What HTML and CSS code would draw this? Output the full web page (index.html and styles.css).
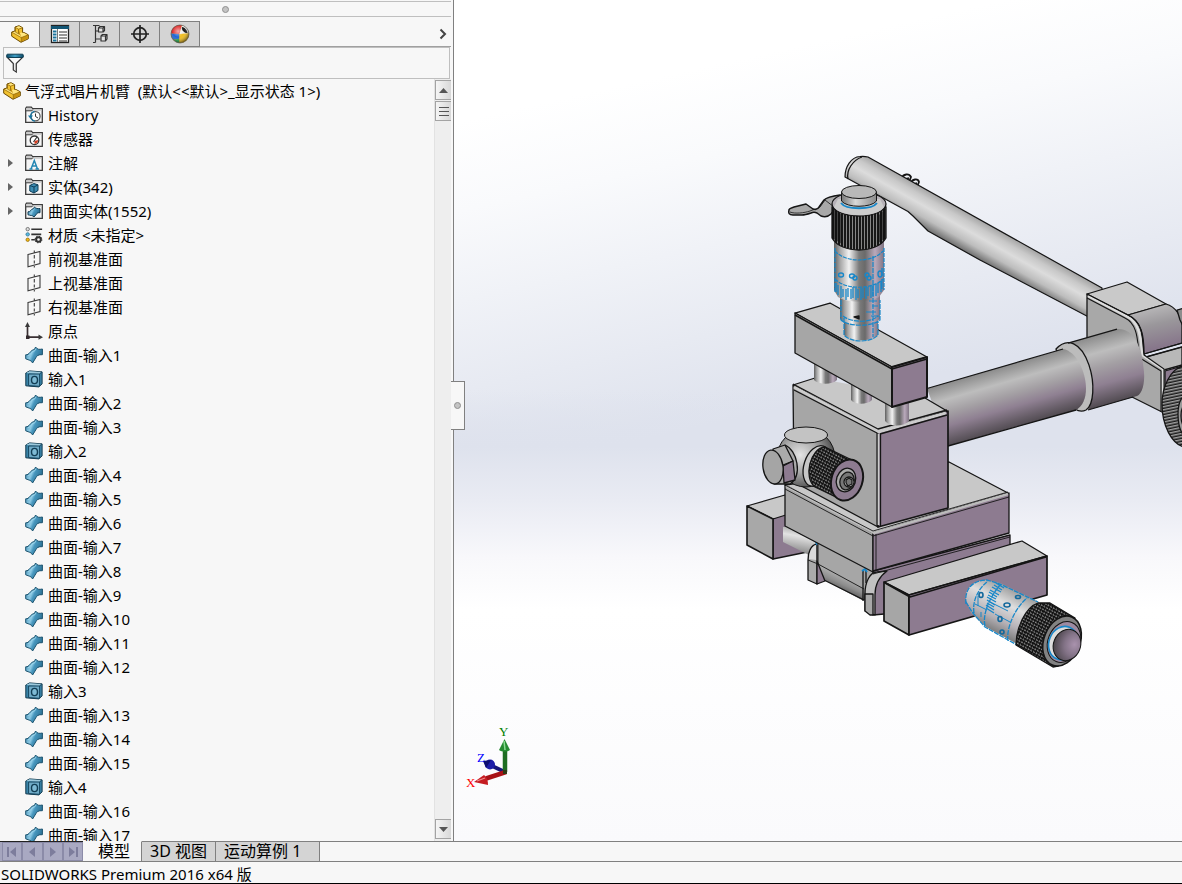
FILE: index.html
```html
<!DOCTYPE html>
<html lang="zh-CN">
<head>
<meta charset="utf-8">
<title>SOLIDWORKS Premium 2016 x64 版</title>
<link rel="stylesheet" href="styles.css">
</head>
<body>
<svg class="sprites" aria-hidden="true">
  <defs>
    <linearGradient id="surf-fill" x1="0" y1="0" x2="1" y2=".4">
      <stop offset="0" stop-color="#3c86ab"/><stop offset=".45" stop-color="#8cc9e4"/><stop offset=".6" stop-color="#4796bd"/><stop offset="1" stop-color="#2f7396"/>
    </linearGradient>
    <linearGradient id="funnel-top" x1="0" x2="1"><stop offset="0" stop-color="#0f4a66"/><stop offset=".5" stop-color="#3fa0c8"/><stop offset="1" stop-color="#0f4a66"/></linearGradient>
    <radialGradient id="ball-shade" cx=".4" cy=".35" r=".65"><stop offset="0" stop-color="#fff" stop-opacity=".6"/><stop offset=".5" stop-color="#fff" stop-opacity="0"/><stop offset="1" stop-color="#000" stop-opacity=".5"/></radialGradient>
  </defs>
  <symbol id="i-part" viewBox="0 0 18 18">
    <path d="M4 2 8 .7l3.600 2V8L13 7.500l4.300 2.300v4L10 17.300.7 11.200V7L4 6z" fill="#f2c230" stroke="#6b4a00" stroke-linejoin="round"/>
    <path d="M4.500 2.200 8 1.300l3 1.500L7.500 4zM1.200 7.200 4.500 6.600l3 2 3-1 2.500 .5 3.500 2-6.300 2.500z" fill="#ffe680"/>
    <path d="M7.500 4v5l3 2.500v5.300L17 13.600V10l-6.500 2.500" fill="#c8920f"/>
    <path d="m4.300 2.300 3.200 1.900v4.600L4.300 7zM7.500 4.200l4-1.400M10.300 12.600l6.700-2.700M10.300 12.600V17M1 7.300l9.300 5.300" fill="none" stroke="#8a6207" stroke-width=".7"/>
  </symbol>
  <symbol id="i-folder" viewBox="0 0 18 18">
    <path d="M.7 16.300V2.500l.8-1.300h4.800l1.300 1.500h9.700v13.600z" fill="#f5f5f5" stroke="#3c3c3c" stroke-width="1.300"/>
    <path d="M1.300 2h5l1 1.500h9.300v1.300H1.300z" fill="#c9c9c9"/>
    <path d="M.7 4.800h6.200l1-1.300" fill="none" stroke="#3c3c3c"/>
  </symbol>
  <symbol id="i-history" viewBox="0 0 18 18"><use href="#i-folder"/>
    <circle cx="10.500" cy="10.300" r="4.600" fill="#fff" stroke="#555" stroke-width="1.200"/><path d="M10.500 7.500v3l2.500 1.500" fill="none" stroke="#333"/><path d="M3 9.500h5L5.500 13z" fill="#1776a3"/><path d="M5.600 10a5 5 0 0 1 4-4.600M6 12.500a5 5 0 0 0 4 2.700" fill="none" stroke="#1776a3" stroke-width="1.200"/></symbol>
  <symbol id="i-sensor" viewBox="0 0 18 18"><use href="#i-folder"/>
    <circle cx="9.500" cy="10.300" r="4.300" fill="#fff" stroke="#333" stroke-width="1.300"/><path d="M9.500 14a4 4 0 0 0 3.600-4L9.500 11z" fill="#d43d20"/><path d="m8.500 12 3.500-5" stroke="#333" stroke-width="1.200"/></symbol>
  <symbol id="i-note" viewBox="0 0 18 18"><use href="#i-folder"/>
    <path d="M4.500 15h3M10.500 15h3.500M6 15 9.300 6.500 12.500 15M7.200 12h4.200" fill="none" stroke="#2386b3" stroke-width="1.500"/></symbol>
  <symbol id="i-solid" viewBox="0 0 18 18"><use href="#i-folder"/>
    <path d="m4.800 7.500 4-2 4.200 1.300v5.700L9 15l-4.200-2z" fill="#3e8db3" stroke="#0e3f59"/><path d="M4.800 7.500 9 9l4-2.200M9 9v6" fill="none" stroke="#0e3f59"/></symbol>
  <symbol id="i-surfset" viewBox="0 0 18 18"><use href="#i-folder"/>
    <path d="M3 9.800c2.500 .5 3-3 5.500-3.200L9.500 5c1.500 1.700 3 1.700 5.500 1.500v4.200c-2.500-.3-3.500 1-4 2L9 15c-1.500-1.800-3.500-1.500-6-2.200z" fill="url(#surf-fill)" stroke="#153f56"/></symbol>
  <symbol id="i-material" viewBox="0 0 20 18">
    <g stroke="#333" stroke-width="1.700"><path d="M7 2.500h12M7 8.300h11M7 14.300h4"/></g>
    <circle cx="3" cy="2.500" r="1.900" fill="#ddd" stroke="#555" stroke-width=".8"/><circle cx="3" cy="8.300" r="1.900" fill="#59b9e0" stroke="#256c8e" stroke-width=".8"/><circle cx="3" cy="14.300" r="1.900" fill="#f5b914" stroke="#8b6606" stroke-width=".8"/>
    <circle cx="15" cy="14" r="2.600" fill="none" stroke="#333" stroke-width="2.200"/><circle cx="15" cy="14" r="3.700" fill="none" stroke="#333" stroke-width="1.200" stroke-dasharray="1.400 1.500"/></symbol>
  <symbol id="i-plane" viewBox="0 0 18 18">
    <path d="M3 4.500 15 1.500v12L3 16.800zM9.300 .5v2M9.300 5v3.500M9.300 10.500v3M9.300 16v1.500" fill="none" stroke="#3c3c3c" stroke-width="1.100"/></symbol>
  <symbol id="i-origin" viewBox="0 0 18 18">
    <path d="M2.500 15V4M2.500 15.200H15" stroke="#3a3033" stroke-width="1.700"/><path d="M0 5 2.500 0 5 5zM13.500 12.600l4.500 2.600-4.500 2.600z" fill="#3a3a3a"/><rect x="1" y="13.500" width="3.500" height="3.500" fill="#332a2d"/></symbol>
  <symbol id="i-surf" viewBox="0 0 18 18">
    <path d="M.7 8.800C4.500 9.300 5 4 9.300 3.600L10.600 1c1.500 2.500 3.500 2.700 6.800 2v5.700c-4-.4-6 1.300-6.600 3.100L7.600 17C6.300 14 4 14.300 .7 12.800z" fill="url(#surf-fill)" stroke="#1b536f"/>
    <path d="M3 9.800c3-.5 3.500-5 7-5.200l1-1.800" fill="none" stroke="#a3dbef" stroke-width=".8"/></symbol>
  <symbol id="i-body" viewBox="0 0 18 18">
    <path d="M.8 3 4.500 .9l12.600 1v12l-3.300 3L.8 15.800z" fill="#3984a8" stroke="#12394d"/><path d="m1 3 3.500-1.800 12 .9L14 4z" fill="#9cc9dc"/><path d="M3.600 4h11v12.300L3.600 15.600z" fill="#6fabc7" stroke="#174761"/><path d="m14.500 4 2.300-2" stroke="#174761"/>
    <ellipse cx="9.500" cy="10" rx="3" ry="3.600" fill="#7ebad4" stroke="#123e55" stroke-width="1.400"/></symbol>
</svg>

<div class="app">
  <main class="workspace">
    <aside class="panel">
      <div class="grip"><span class="dot"></span></div>
      <nav class="tabs" aria-label="管理器">
        <button class="tab active" aria-label="特征树"><svg width="18" height="18"><use href="#i-part"/></svg></button>
        <button class="tab" aria-label="属性"><svg width="20" height="20" viewBox="0 0 20 20"><rect x="1.500" y="1.500" width="17" height="17" fill="#fff" stroke="#222" stroke-width="1.300"/><path d="M1 2h18v3H1z" fill="#125574"/><path d="M7.500 5v13" stroke="#777"/><path d="M3 7.500h3.500M3 10.500h3.500M3 13.500h3.500M3 16.500h3.500" stroke="#1b739b" stroke-width="1.800"/><path d="M9 8h8M9 11h8M9 14h8M9 17h8" stroke="#333" stroke-width="1.100"/></svg></button>
        <button class="tab" aria-label="配置"><svg width="20" height="20" viewBox="0 0 20 20"><g fill="#e4e4e4" stroke="#333" stroke-width="1.200" stroke-linejoin="round"><path d="M5.500 1.500v17M5.500 7h4M5.500 15h5M3 1.500h2.500M3 18.500h2.500M5.500 1.500h4" fill="none"/><path d="M8.500 4 10 2.500h4.500v4L13 8H8.500zM8.500 4H13v4M13 4l1.500-1.500M11 12l1.500-1.500H17v4.500L15.500 17H11zM11 12h4.500v5M15.500 12l1.500-1.500"/></g></svg></button>
        <button class="tab" aria-label="尺寸"><svg width="20" height="20" viewBox="0 0 20 20"><circle cx="10" cy="10" r="6.300" fill="none" stroke="#222" stroke-width="1.700"/><path d="M10 1v18M1 10h18" stroke="#222" stroke-width="1.700"/></svg></button>
        <button class="tab" aria-label="外观"><svg width="20" height="20" viewBox="0 0 20 20"><circle cx="10" cy="10" r="9" fill="#efbd1e"/><path d="M9.500 10 1 9.500A9 9 0 0 1 12 1.200z" fill="#e02d2d"/><path d="M9.500 10 12 1.200a9 9 0 0 1 7 8.300z" fill="#ececec"/><path d="m9.500 10-8.500-.5a9 9 0 0 0 2.500 6.300l6-1z" fill="#1f66d3"/><path d="m3.500 15.800 6-1V19a9 9 0 0 1-6-3.200z" fill="#21a34a"/><path d="M9.500 10 19 9.500A9 9 0 0 1 9.500 19z" fill="#efbd1e"/><path d="M12 3c2.500 0 5 3 5.500 6-3 .5-6.500-3-5.500-6z" fill="#161616"/><circle cx="10" cy="10" r="9" fill="url(#ball-shade)" stroke="#555" stroke-width=".7"/></svg></button>
        <button class="more" aria-label="更多"><svg width="8" height="12" viewBox="0 0 8 12"><path d="m1.500 1.500 4.500 4.500-4.500 4.500" fill="none" stroke="#444" stroke-width="2"/></svg></button>
      </nav>
      <label class="filter">
        <svg width="18" height="20" viewBox="0 0 18 20"><path d="M1 4 7.300 10.500V17l3 2v-8.500L17 4z" fill="#fafafa" stroke="#333" stroke-width="1.200"/><path d="M9.300 10.500V18" stroke="#aaa"/><rect x=".7" y="1.200" width="16.600" height="3.300" rx="1" fill="url(#funnel-top)" stroke="#0f4056"/></svg>
        <input type="text" aria-label="过滤器">
      </label>
      <div class="tree-area">
        <ul class="tree">
          <li class="root"><svg class="ic"><use href="#i-part"/></svg><span>气浮式唱片机臂  (默认&lt;&lt;默认&gt;_显示状态 1&gt;)</span></li>
          <li><svg class="ic"><use href="#i-history"/></svg><span>History</span></li>
          <li><svg class="ic"><use href="#i-sensor"/></svg><span>传感器</span></li>
          <li><button class="exp" aria-label="展开"></button><svg class="ic"><use href="#i-note"/></svg><span>注解</span></li>
          <li><button class="exp" aria-label="展开"></button><svg class="ic"><use href="#i-solid"/></svg><span>实体(342)</span></li>
          <li><button class="exp" aria-label="展开"></button><svg class="ic"><use href="#i-surfset"/></svg><span>曲面实体(1552)</span></li>
          <li><svg class="ic"><use href="#i-material"/></svg><span>材质 &lt;未指定&gt;</span></li>
          <li><svg class="ic"><use href="#i-plane"/></svg><span>前视基准面</span></li>
          <li><svg class="ic"><use href="#i-plane"/></svg><span>上视基准面</span></li>
          <li><svg class="ic"><use href="#i-plane"/></svg><span>右视基准面</span></li>
          <li><svg class="ic"><use href="#i-origin"/></svg><span>原点</span></li>
          <li><svg class="ic"><use href="#i-surf"/></svg><span>曲面-输入1</span></li>
          <li><svg class="ic"><use href="#i-body"/></svg><span>输入1</span></li>
          <li><svg class="ic"><use href="#i-surf"/></svg><span>曲面-输入2</span></li>
          <li><svg class="ic"><use href="#i-surf"/></svg><span>曲面-输入3</span></li>
          <li><svg class="ic"><use href="#i-body"/></svg><span>输入2</span></li>
          <li><svg class="ic"><use href="#i-surf"/></svg><span>曲面-输入4</span></li>
          <li><svg class="ic"><use href="#i-surf"/></svg><span>曲面-输入5</span></li>
          <li><svg class="ic"><use href="#i-surf"/></svg><span>曲面-输入6</span></li>
          <li><svg class="ic"><use href="#i-surf"/></svg><span>曲面-输入7</span></li>
          <li><svg class="ic"><use href="#i-surf"/></svg><span>曲面-输入8</span></li>
          <li><svg class="ic"><use href="#i-surf"/></svg><span>曲面-输入9</span></li>
          <li><svg class="ic"><use href="#i-surf"/></svg><span>曲面-输入10</span></li>
          <li><svg class="ic"><use href="#i-surf"/></svg><span>曲面-输入11</span></li>
          <li><svg class="ic"><use href="#i-surf"/></svg><span>曲面-输入12</span></li>
          <li><svg class="ic"><use href="#i-body"/></svg><span>输入3</span></li>
          <li><svg class="ic"><use href="#i-surf"/></svg><span>曲面-输入13</span></li>
          <li><svg class="ic"><use href="#i-surf"/></svg><span>曲面-输入14</span></li>
          <li><svg class="ic"><use href="#i-surf"/></svg><span>曲面-输入15</span></li>
          <li><svg class="ic"><use href="#i-body"/></svg><span>输入4</span></li>
          <li><svg class="ic"><use href="#i-surf"/></svg><span>曲面-输入16</span></li>
          <li><svg class="ic"><use href="#i-surf"/></svg><span>曲面-输入17</span></li>
        </ul>
        <div class="scroll">
          <button class="sbtn" aria-label="向上"><svg width="9" height="5"><path d="M0 5 4.500 0 9 5z" fill="#555"/></svg></button>
          <button class="sbtn" aria-label="滑块"><svg width="10" height="11"><path d="M0 1.500h10M0 5.500h10M0 9.500h10" stroke="#555"/></svg></button>
          <span class="track"></span>
          <button class="sbtn" aria-label="向下"><svg width="9" height="5"><path d="M0 0h9L4.500 5z" fill="#555"/></svg></button>
        </div>
      </div>
      <button class="splitter" aria-label="折叠面板"><span class="dot"></span></button>
    </aside>

    <section class="viewport" aria-label="模型视图">
      <svg class="scene" viewBox="454 0 728 841" preserveAspectRatio="xMidYMid slice">
        <defs>
          <linearGradient id="sky" gradientUnits="userSpaceOnUse" x1="600" y1="90" x2="676" y2="432"><stop offset="0" stop-color="#fff"/><stop offset=".25" stop-color="#f9fafc"/><stop offset="1" stop-color="#dee2ed"/></linearGradient>
          <linearGradient id="ground" gradientUnits="userSpaceOnUse" x1="0" y1="390" x2="0" y2="610"><stop offset="0" stop-color="#dee2ed" stop-opacity="0"/><stop offset=".26" stop-color="#dee2ed"/><stop offset=".5" stop-color="#e9ebf3"/><stop offset=".76" stop-color="#f8f8fb"/><stop offset="1" stop-color="#fff"/></linearGradient>
          <linearGradient id="low" gradientUnits="userSpaceOnUse" x1="0" y1="610" x2="0" y2="841"><stop offset="0" stop-color="#fff"/><stop offset="1" stop-color="#fafafc"/></linearGradient>
          <linearGradient id="arm" gradientUnits="userSpaceOnUse" x1="1000" y1="231" x2="982" y2="263"><stop offset="0" stop-color="#a5a5a5"/><stop offset=".2" stop-color="#c8c8c8"/><stop offset=".42" stop-color="#dcdcdc"/><stop offset=".7" stop-color="#bdbdbd"/><stop offset="1" stop-color="#626262"/></linearGradient>
          <linearGradient id="tube" gradientUnits="userSpaceOnUse" x1="1000" y1="367" x2="1018" y2="429"><stop offset="0" stop-color="#8a8a8a"/><stop offset=".25" stop-color="#bdbdbd"/><stop offset=".45" stop-color="#a4a0a4"/><stop offset=".65" stop-color="#8f8092"/><stop offset=".85" stop-color="#665d67"/><stop offset="1" stop-color="#494449"/></linearGradient>
          <linearGradient id="sleeve" gradientUnits="userSpaceOnUse" x1="1095" y1="335" x2="1114" y2="403"><stop offset="0" stop-color="#8a8a8a"/><stop offset=".25" stop-color="#bdbdbd"/><stop offset=".45" stop-color="#a4a0a4"/><stop offset=".7" stop-color="#8f8092"/><stop offset="1" stop-color="#4f494f"/></linearGradient>
          <linearGradient id="metal" x1="0" x2="1"><stop offset="0" stop-color="#5e5e5e"/><stop offset=".12" stop-color="#a5a5a5"/><stop offset=".3" stop-color="#f2f2f2"/><stop offset=".5" stop-color="#7a7a7a"/><stop offset=".62" stop-color="#6a6a6a"/><stop offset=".82" stop-color="#b9a9bb"/><stop offset="1" stop-color="#807584"/></linearGradient>
          <linearGradient id="cap" x1="0" x2="1"><stop offset="0" stop-color="#777"/><stop offset=".4" stop-color="#d8d8d8"/><stop offset="1" stop-color="#8a8a8a"/></linearGradient>
          <linearGradient id="bend" x1="0" y1="0" x2=".25" y2="1"><stop offset="0" stop-color="#c6c6c6"/><stop offset=".5" stop-color="#9a979b"/><stop offset="1" stop-color="#857389"/></linearGradient>
          <linearGradient id="rod" x1=".6" y1="0" x2=".4" y2="1"><stop offset="0" stop-color="#999"/><stop offset=".35" stop-color="#e2e2e2"/><stop offset="1" stop-color="#777"/></linearGradient>
          <linearGradient id="rod-low" gradientUnits="userSpaceOnUse" x1="845" y1="576" x2="838" y2="592"><stop offset="0" stop-color="#b0b0b0"/><stop offset=".5" stop-color="#8c8c8c"/><stop offset="1" stop-color="#4c4c4c"/></linearGradient>
          <linearGradient id="mic" gradientUnits="userSpaceOnUse" x1="1013" y1="588" x2="991" y2="632"><stop offset="0" stop-color="#999"/><stop offset=".35" stop-color="#dfdfdf"/><stop offset=".7" stop-color="#b6b2b7"/><stop offset="1" stop-color="#777"/></linearGradient>
          <radialGradient id="ball" cx=".4" cy=".45" r=".6"><stop offset="0" stop-color="#e4e4e4"/><stop offset=".5" stop-color="#aaa"/><stop offset="1" stop-color="#4c4c4c"/></radialGradient>
          <radialGradient id="dome" cx=".75" cy=".4" r=".8"><stop offset="0" stop-color="#a992ad"/><stop offset=".45" stop-color="#837387"/><stop offset="1" stop-color="#454045"/></radialGradient>
          <pattern id="knurl-v" width="3" height="8" patternUnits="userSpaceOnUse"><rect width="3" height="8" fill="#161616"/><rect width="1" height="8" fill="#858585"/></pattern>
          <pattern id="knurl-x" width="3" height="3" patternUnits="userSpaceOnUse" patternTransform="rotate(28)"><rect width="3" height="3" fill="#111"/><rect width="2" height="1" fill="#888"/><rect width="1" height="1" y="2" fill="#555"/></pattern>
          <pattern id="knurl-h" width="6" height="3" patternUnits="userSpaceOnUse" patternTransform="rotate(-12)"><rect width="6" height="3" fill="#1a1a1a"/><rect width="6" height="1.500" fill="#a0a0a0"/></pattern>
        </defs>
        <path d="M254 0h1200v611H254z" fill="url(#sky)"/>
        <path d="M254 390h1200v221H254z" fill="url(#ground)"/>
        <path d="M254 610h1200v275H254z" fill="url(#low)"/>

        <g stroke="#151515" stroke-width="1.300" stroke-linejoin="round">
          <path d="M902 178c1-4 7-5 9-1l-2 5M911 183c1-4 7-5 8-1l-2 5M905 179l4-1M914 184l3-1" fill="none" stroke-width="1.800"/>
          <path d="M845 177c0-10 6-20 15-20.500 3-.5 6 0 8 .500l234 131v36l-122-64-52-29-15-15-5-4.500z" fill="url(#arm)" stroke-width="1.200"/>
          <path d="M848 179c-2-9 5-19 14-22" fill="none"/>
          <path d="M789 210c0-1 2-2 5-3l12-3 7 5c3 1 5 0 6-2l5-7c3-3 9-4 16-5l4 6-9 8-4 5c-3 3-7 3-10 2l-4-3c-2-1-4-1-6 0-3 1-6 2-9 2h-9c-4 0-5-2-4-5z" fill="#a8a8a8" stroke-width="1.500"/>
          <path d="M790 212c5 2 14 1 20-1 4-2 8-2 10-4l5-7 9 7" fill="none" stroke-width=".8"/>

          <path d="M1087 294l41 21c18 8 14 29 16 40l20 14v44l-32-16-45-45z" fill="#a8a8a8"/>
          <path d="m1087 294 40-12 39 22-38 11z" fill="#c9c9c9"/>
          <path d="m1128 315 38-11c10 3 16 13 16 20v19l-38 11c0-18-2-32-16-39z" fill="url(#bend)"/>
          <path d="m1146 357 36-10v18l-18 5z" fill="#b8b8b8"/>
          <path d="m1165 371 17-5v34h-17z" fill="#8d7b90"/>
          <path d="M1088 296 1127 316.500c16 8 13 30 16 39l20 13.500v43" fill="none" stroke="#ddd" stroke-width="2.500"/>
          <path d="m1087 294 41 21c18 8 14 29 16 40l20 14v44M1087 298l38 20c15 7 12 30 15 40l21 13v41M1144 354l38-11M1146 357l36-10" fill="none" stroke-width="1.100"/>
          <path d="m1177 310 7-2v20l-4-8z" fill="#8c8c8c"/>
          <path d="M1184 366c-14 2-22 22-22 38 0 22 10 40 22 43z" fill="url(#knurl-h)"/>
          <path d="M1184 396c-8 6-8 30 0 40z" fill="#9a9a9a"/><path d="M1184 405c-4 5-4 16 0 22z" fill="#8d7b90"/>
          <path d="m1068 343 49-14c16-1 25 16 27 43 1 12-2 22-7 24l-49 14c9-16 7-63-20-67z" fill="url(#sleeve)" stroke="none"/>
          <path d="M1056 349c11-12 25-7 33 16 6 18 5 40-3 45-4 2-8 1-11-1z" fill="#bcbcbc"/>
          <path d="m927 388.500 136-39.500c20 3 33 50 13 61L948 446z" fill="url(#tube)" stroke="none"/>
          <path d="m927 388.500 136-39.500M1076 410 948 446M1068 343l49-14M1088 410l45-13" fill="none"/>

          <path d="m747 506 38-11 30 24h-42z" fill="#c8c8c8"/>
          <path d="m773 519 16-5 28 36-44 9z" fill="#8d7b90"/>
          <path d="m747 506 26 13v40l-26-14z" fill="#a8a8a8" stroke-width="1.600"/>
          <path d="m783 527 10-1 24 16-6 14-28-14z" fill="url(#rod)" stroke="none"/>
          <path d="m785 486 88 47v61l-8 6-48-29v-28l-32-17z" fill="#a6a6a6" stroke="none"/>
          <path d="m818 565 48 23v12l-4 0-42-22z" fill="url(#rod-low)" stroke="none"/><path d="m820 578 44 22" fill="none"/>
          <path d="M808 560c0-8 3-15 9-16v40l-9-4z" fill="#aaa"/><path d="M809 559c0-7 3-13 7-14v15z" fill="#dadada" stroke="none"/>
          <path d="m817 561 8 20-8 3z" fill="#8d7b90"/><path d="M808 560l10 4v-23M818 564l46 25" fill="none" stroke-width=".9"/><path d="m815 541 2 4" stroke="#1787c9"/>
          <path d="m873 571 137-36v10L884 614l-11 1z" fill="#8d7b90"/>
          <path d="M865 594c0-12 5-22 12-22l10-1c-7 5-12 12-12 24v20l-10-4z" fill="#c1c1c1"/>
          <path d="M865 594h8v21h-3l-5-4z" fill="#a8a8a8"/><path d="M863 571v30M866 571v12" fill="none"/><path d="M862 571l3-2 2 3" fill="none" stroke="#1787c9" stroke-width="2"/>
          <path d="m785 485 164-23 59 31-135 40z" fill="#c8c8c8"/>
          <path d="m785 485 88 48v39l-88-46z" fill="#a6a6a6"/>
          <path d="m873 533 136-40v40l-136 38z" fill="#8d7b90"/>
          <path d="m786 486 88 47 134-39" fill="none" stroke="#bbb" stroke-width="2.500"/><path d="m785 489 88 47 136-39M876 534v36M785 485l88 46 135-39M873 574l137-37" fill="none" stroke-width=".9"/>

          <path d="m793 385 22-7 110 20 22 13-69 21z" fill="#c8c8c8" stroke="none"/><path d="m793 385 22-7M925 398l22 13" fill="none"/>
          <path d="m793 385 85 47v95l-84-45z" fill="#a6a6a6"/>
          <path d="m878 432 70-21v97l-70 19z" fill="#8d7b90" stroke-width="1.700"/>
          <path d="m794 387 84 45 68-19M878 434v91" fill="none" stroke="#ccc" stroke-width="3"/>
          <path d="m793 384 85 45 69-19M794 390l83 43v93M880.500 434v92M880 434l67-19" fill="none"/>
          <g fill="url(#metal)" stroke="none"><path d="M814 364h23v16c-5 5-18 5-23 0z"/><path d="M851 384h21v16c-5 5-17 5-21 0z"/><path d="M885 402h24v19c-6 6-19 6-24 0z"/></g>
          <path d="m795 313 35-10 97 54-35 10z" fill="#c8c8c8"/>
          <path d="m795 313 97 54v40l-97-54z" fill="#a6a6a6"/>
          <path d="m892 367 35-10v40l-35 10z" fill="#8d7b90" stroke-width="2"/>
          <path d="m795 315 97 54 35-10" fill="none" stroke-width="1.500"/>

          <g stroke="none"><path d="M844 315h34v20c-7 7-27 7-34 0z" fill="url(#metal)"/><path d="M840 290h40v29c-7 8-33 8-40 0z" fill="url(#metal)"/><path d="M834 240h50v50l-5 7c-10 6-32 6-41 0l-4-7z" fill="url(#metal)"/></g>
          <g fill="none" stroke="#1787c9" stroke-width="1.200">
            <path d="M835 251c10 12 38 12 48 0M835 279c10 11 38 11 48 0M835 248v44M884 248v42" stroke-dasharray="4 1"/>
            <path d="M836 283v9m2-7v10m3-9v12m2-9v8m3-8v11m2-12v9m3-8v10m2-12v11m3-10v12m2-11v9m3-10v12m2-12v10m3-11v12m2-12v9m3-10v12m2-13v11m3-12v12m2-13v10m3-12v11m1-13v10" stroke-width="1.300"/>
            <path d="M873 256v81M841 300v20c8 7 31 7 39 0v-20M844 318v17c7 8 27 8 34 0v-13M843 316c8 7 28 7 35 0" stroke-dasharray="5 1"/>
            <path d="M869 301h8M872 306h6M866 312h10M871 316h8" stroke-width="1"/>
            <g stroke-width="1.400"><ellipse cx="841" cy="275" rx="2.500" ry="2"/><ellipse cx="852" cy="276" rx="2.500" ry="2"/><ellipse cx="855" cy="278" rx="2" ry="2"/><ellipse cx="867" cy="275" rx="2" ry="2"/><ellipse cx="869" cy="278" rx="2" ry="2"/><ellipse cx="880" cy="274" rx="2" ry="3"/><path d="M882 268v8"/></g>
          </g>
          <path d="m854 317 5-1v3z" fill="#222"/>
          <path d="M832 207v31c9 16 45 16 54 0v-31z" fill="url(#knurl-v)"/><path d="M832 207v31l10 6v-29zM878 216v27l8-5v-30z" fill="#111" fill-opacity=".55" stroke="none"/>
          <ellipse cx="859" cy="204" rx="27" ry="12" fill="#b6b1b7"/><path d="M834 207c6 10 42 12 50 0l-4-8h-42z" fill="#ccc" stroke="none"/>
          <path d="M841 203c5 7 31 7 36 0" fill="none" stroke="#1787c9" stroke-width="1.800"/>
          <path d="M841.500 192v9c5 7 30 7 35 0v-9z" fill="url(#cap)" stroke-width="1"/><ellipse cx="859" cy="192" rx="17.500" ry="6.500" fill="#b8b8b8" stroke-width="1"/>

          <circle cx="806" cy="458" r="29" fill="url(#ball)" stroke-width="1"/><ellipse cx="806" cy="435" rx="21.500" ry="8" fill="#c3c3c3" stroke-width="1"/>
          <path d="m773 449 12-4c12 5 18 30 5 39h-16z" fill="#aaa"/><path d="m783 466 10-5 2 19-11 3z" fill="#8d7b90"/><path d="m785 445 8 16-10 4" fill="none"/>
          <ellipse cx="773" cy="467" rx="10" ry="17" fill="#a5a5a5" transform="rotate(-8 773 467)"/>
          <ellipse cx="817" cy="466" rx="13" ry="21" fill="#c7c7c7" transform="rotate(18 817 466)"/>
          <path d="M825 447c-15 1-22 31-10 40l27 13 14-38z" fill="url(#knurl-x)"/>
          <ellipse cx="847" cy="480" rx="15.500" ry="21" fill="#8d7b90" transform="rotate(18 847 480)" stroke-width="2"/>
          <ellipse cx="846" cy="480" rx="9.500" ry="12" fill="#aaa" transform="rotate(18 846 480)"/><ellipse cx="847" cy="481" rx="7" ry="9" fill="#777" transform="rotate(18 847 481)"/><circle cx="849" cy="482" r="5" fill="#ddd"/><path d="m846 480 3-2 3 2v4l-4 2-2-3z" fill="#777"/>

          <path d="m884 582 138-41 25 15-138 39z" fill="#c8c8c8"/><path d="m884 582 25 13v40l-25-14z" fill="#a6a6a6" stroke-width="1.700"/><path d="m909 595 138-39v39l-138 40z" fill="#8d7b90" stroke-width="1.700"/>
          <path d="m885 583 25 14 136-40" fill="none" stroke-width="1.500"/>
          <path d="M966 600c-2-10 6-20 21-20l13 3 39 19-20 43-33-18-15-14z" fill="url(#mic)" stroke="none"/>
          <g fill="none" stroke="#1787c9" stroke-width="1.300"><path d="M966 604c-2-14 6-24 21-24l13 4 38 18M966 602l6 10 13 15 32 18M974 613c-2-13 5-25 14-32M985 626c-3-13 6-31 16-42M1008 641c-2-13 7-33 19-43" stroke-dasharray="5 1"/>
            <path d="m996 583 8 5m-10-3 8 5m-10-3 9 5m-11-2 9 5m-10-3 8 5m-9-2 8 4m-9-2 9 5m-9-2 8 5m-8-2 7 4m-8-2 8 5m-8-2 8 5" stroke-width="1.300"/><path d="M975 604l12 6M995 614l15 8M990 602l18 9M978 596v10M981 612v5" stroke-width="1"/></g>
          <g fill="none" stroke="#14699c" stroke-width="1.600"><ellipse cx="981" cy="595" rx="2" ry="2.500"/><ellipse cx="1007" cy="605" rx="3" ry="2"/><ellipse cx="1018" cy="597" rx="2.500" ry="1.500"/><ellipse cx="1000" cy="619" rx="2" ry="2.500"/><ellipse cx="1002" cy="632" rx="2" ry="2"/></g>
          <path d="M1016 645c0-16 9-38 22-42h12l25 15-17 48-5 1z" fill="url(#knurl-x)"/>
          <ellipse cx="1062" cy="641" rx="18" ry="26" fill="#828282" transform="rotate(22 1062 641)" stroke-width="1.600"/>
          <ellipse cx="1064" cy="642" rx="16" ry="21" fill="#9d8aa0" transform="rotate(22 1064 642)" stroke-width="1"/>
          <ellipse cx="1063" cy="643" rx="14" ry="17" fill="#ddd" transform="rotate(22 1063 643)" stroke="#1787c9" stroke-width="1.600"/>
          <ellipse cx="1067" cy="645" rx="13.500" ry="16" fill="url(#dome)" transform="rotate(22 1067 645)" stroke-width="1"/>
        </g>

        <g class="triad">
          <path d="m505 772-15-7" stroke="#14147a" stroke-width="4"/><circle cx="490" cy="764.500" r="5" fill="#1c1ca8"/><path d="m483 761 8-1-5 8z" fill="#0d0d70"/>
          <path d="M505 772v-24" stroke="#1e6e22" stroke-width="4.500"/><path d="m504.500 739 5.500 11c-3 2-8 2-11 0z" fill="#268b32"/><path d="m504 741 1 9" stroke="#8bdc93" stroke-width="1.500"/>
          <path d="m506 772-20 6.500" stroke="#a81217" stroke-width="4.500"/><path d="m474 782 10-7c3 2 4 6 4 10z" fill="#c51c22"/><path d="m477 781 8-3" stroke="#f28b8b" stroke-width="1.300"/><rect x="503" y="770" width="4" height="4" fill="#2f3a16"/>
          <text x="499" y="736" fill="#008000">Y</text><text x="466" y="787" fill="#f00">X</text><text x="477" y="762" fill="#00f">Z</text>
        </g>
      </svg>
    </section>
  </main>

  <nav class="sheets" aria-label="视图标签">
    <div class="nav">
      <button aria-label="首页"><svg width="10" height="12"><path d="M1 1v10" stroke="#7d7d9c" stroke-width="2"/><path d="M9 1v10L3 6z" fill="#7d7d9c"/></svg></button>
      <button aria-label="上一页"><svg width="10" height="12"><path d="M8 1v10L2 6z" fill="#7d7d9c"/></svg></button>
      <button aria-label="下一页"><svg width="10" height="12"><path d="M2 1v10l6-5z" fill="#7d7d9c"/></svg></button>
      <button aria-label="末页"><svg width="10" height="12"><path d="M9 1v10" stroke="#7d7d9c" stroke-width="2"/><path d="M1 1v10l6-5z" fill="#7d7d9c"/></svg></button>
    </div>
    <button class="sheet current">模型</button>
    <button class="sheet">3D 视图</button>
    <button class="sheet wide">运动算例 1</button>
    <span class="rest"></span>
  </nav>
  <footer class="status">SOLIDWORKS Premium 2016 x64 版</footer>
</div>
</body>
</html>
```
FILE: styles.css
```css
* { box-sizing: border-box; }
body {
  margin: 0;
  font-family: "Noto Sans", "Noto Sans CJK SC", sans-serif;
  font-size: 15px;
  color: #000;
  background: #f7f7f7;
}
button {
  margin: 0;
  padding: 0;
  border: 0;
  background: none;
  font: inherit;
  color: inherit;
}
svg { display: block; flex: none; }
.sprites { position: absolute; width: 0; height: 0; }

.app { display: flex; flex-direction: column; height: 100vh; }
.workspace { display: flex; flex: 1; min-height: 0; }

.panel {
  position: relative;
  display: flex;
  flex-direction: column;
  flex: none;
  width: 454px;
  padding-right: 2px;
  border-right: 1px solid #808080;
  background: #f7f7f7;
}
.grip {
  display: flex;
  align-items: center;
  justify-content: center;
  height: 16px;
  margin-top: 1px;
  border-top: 1px solid #bfbfbf;
  border-bottom: 1px solid #bfbfbf;
}
.dot {
  width: 7px;
  height: 7px;
  border: 1px solid #909090;
  border-radius: 50%;
  background: #c4c4c4;
}
.tabs { display: flex; height: 26px; margin-top: 4px; }
.tab {
  display: flex;
  align-items: center;
  justify-content: center;
  width: 40px;
  border: 1px solid #808080;
  border-left: 0;
  background: #d4d4d4;
}
.tab.active {
  border-bottom-color: #f7f7f7;
  background: #f7f7f7;
}
.more {
  display: flex;
  flex: 1;
  align-items: center;
  justify-content: flex-end;
  padding-right: 4px;
  border-bottom: 1px solid #a0a0a0;
}
.filter {
  display: flex;
  align-items: center;
  height: 32px;
  margin: 0 1px 0 3px;
  padding-left: 2px;
  border: 1px solid #bfbfbf;
}
.filter input {
  flex: 1;
  min-width: 0;
  height: 24px;
  border: 0;
  outline: 0;
  background: none;
  font: inherit;
}
.tree-area { display: flex; flex: 1; min-height: 0; }
.tree {
  flex: 1;
  margin: 0;
  padding: 0;
  overflow: hidden;
  list-style: none;
}
.tree li {
  display: flex;
  position: relative;
  align-items: center;
  gap: 5px;
  height: 24px;
  padding-left: 25px;
  line-height: 24px;
  white-space: pre;
}
.tree .root { padding-left: 3px; gap: 4px; }
.ic { width: 18px; height: 18px; }
.exp {
  position: absolute;
  left: 8px;
  border-top: 4px solid transparent;
  border-bottom: 4px solid transparent;
  border-left: 5px solid #666;
}
.scroll {
  display: flex;
  flex-direction: column;
  gap: 1px;
  width: 17px;
  padding: 1px 0 2px;
  border-left: 1px solid #e2e2e2;
  background: #eee;
}
.sbtn {
  display: flex;
  align-items: center;
  justify-content: center;
  height: 20px;
  border: 1px solid #a3a3a3;
  border-right: 0;
  background: linear-gradient(to right, #f5f5f5, #d8d8d8);
}
.track { flex: 1; }
.splitter {
  position: absolute;
  z-index: 1;
  top: 381px;
  left: 451px;
  display: flex;
  align-items: center;
  justify-content: center;
  width: 14px;
  height: 49px;
  border: 1px solid #808080;
  border-left: 0;
  background: #f7f7f7;
}

.viewport { flex: 1; min-width: 0; overflow: hidden; background: #fff; }
.scene { width: 100%; height: 100%; }
.triad text { font-family: "Liberation Serif", serif; font-size: 13px; }

.sheets { display: flex; flex: none; height: 21px; font-size: 16px; }
.nav {
  display: flex;
  width: 83px;
  padding-left: 2px;
  border-top: 1px solid #222;
  border-bottom: 1px solid #808080;
  background: #a5a5be;
}
.nav button {
  display: flex;
  flex: 1;
  align-items: center;
  justify-content: center;
  border: 1px solid #8b8ba8;
  background: #a9a9c2;
}
.sheet {
  padding: 0 8px;
  border: 1px solid #808080;
  border-left: 0;
  background: #d4d4d4;
  line-height: 19px;
}
.sheet.current {
  width: 59px;
  padding: 0 8px 0 12px;
  border-top-color: #f7f7f7;
  background: #f7f7f7;
}
.sheet.wide { padding-right: 18px; }
.rest { flex: 1; border-top: 1px solid #808080; border-bottom: 1px solid #808080; }
.status {
  flex: none;
  height: 22px;
  padding-left: 1px;
  border-bottom: 1px solid #000;
  line-height: 24px;
}
```
